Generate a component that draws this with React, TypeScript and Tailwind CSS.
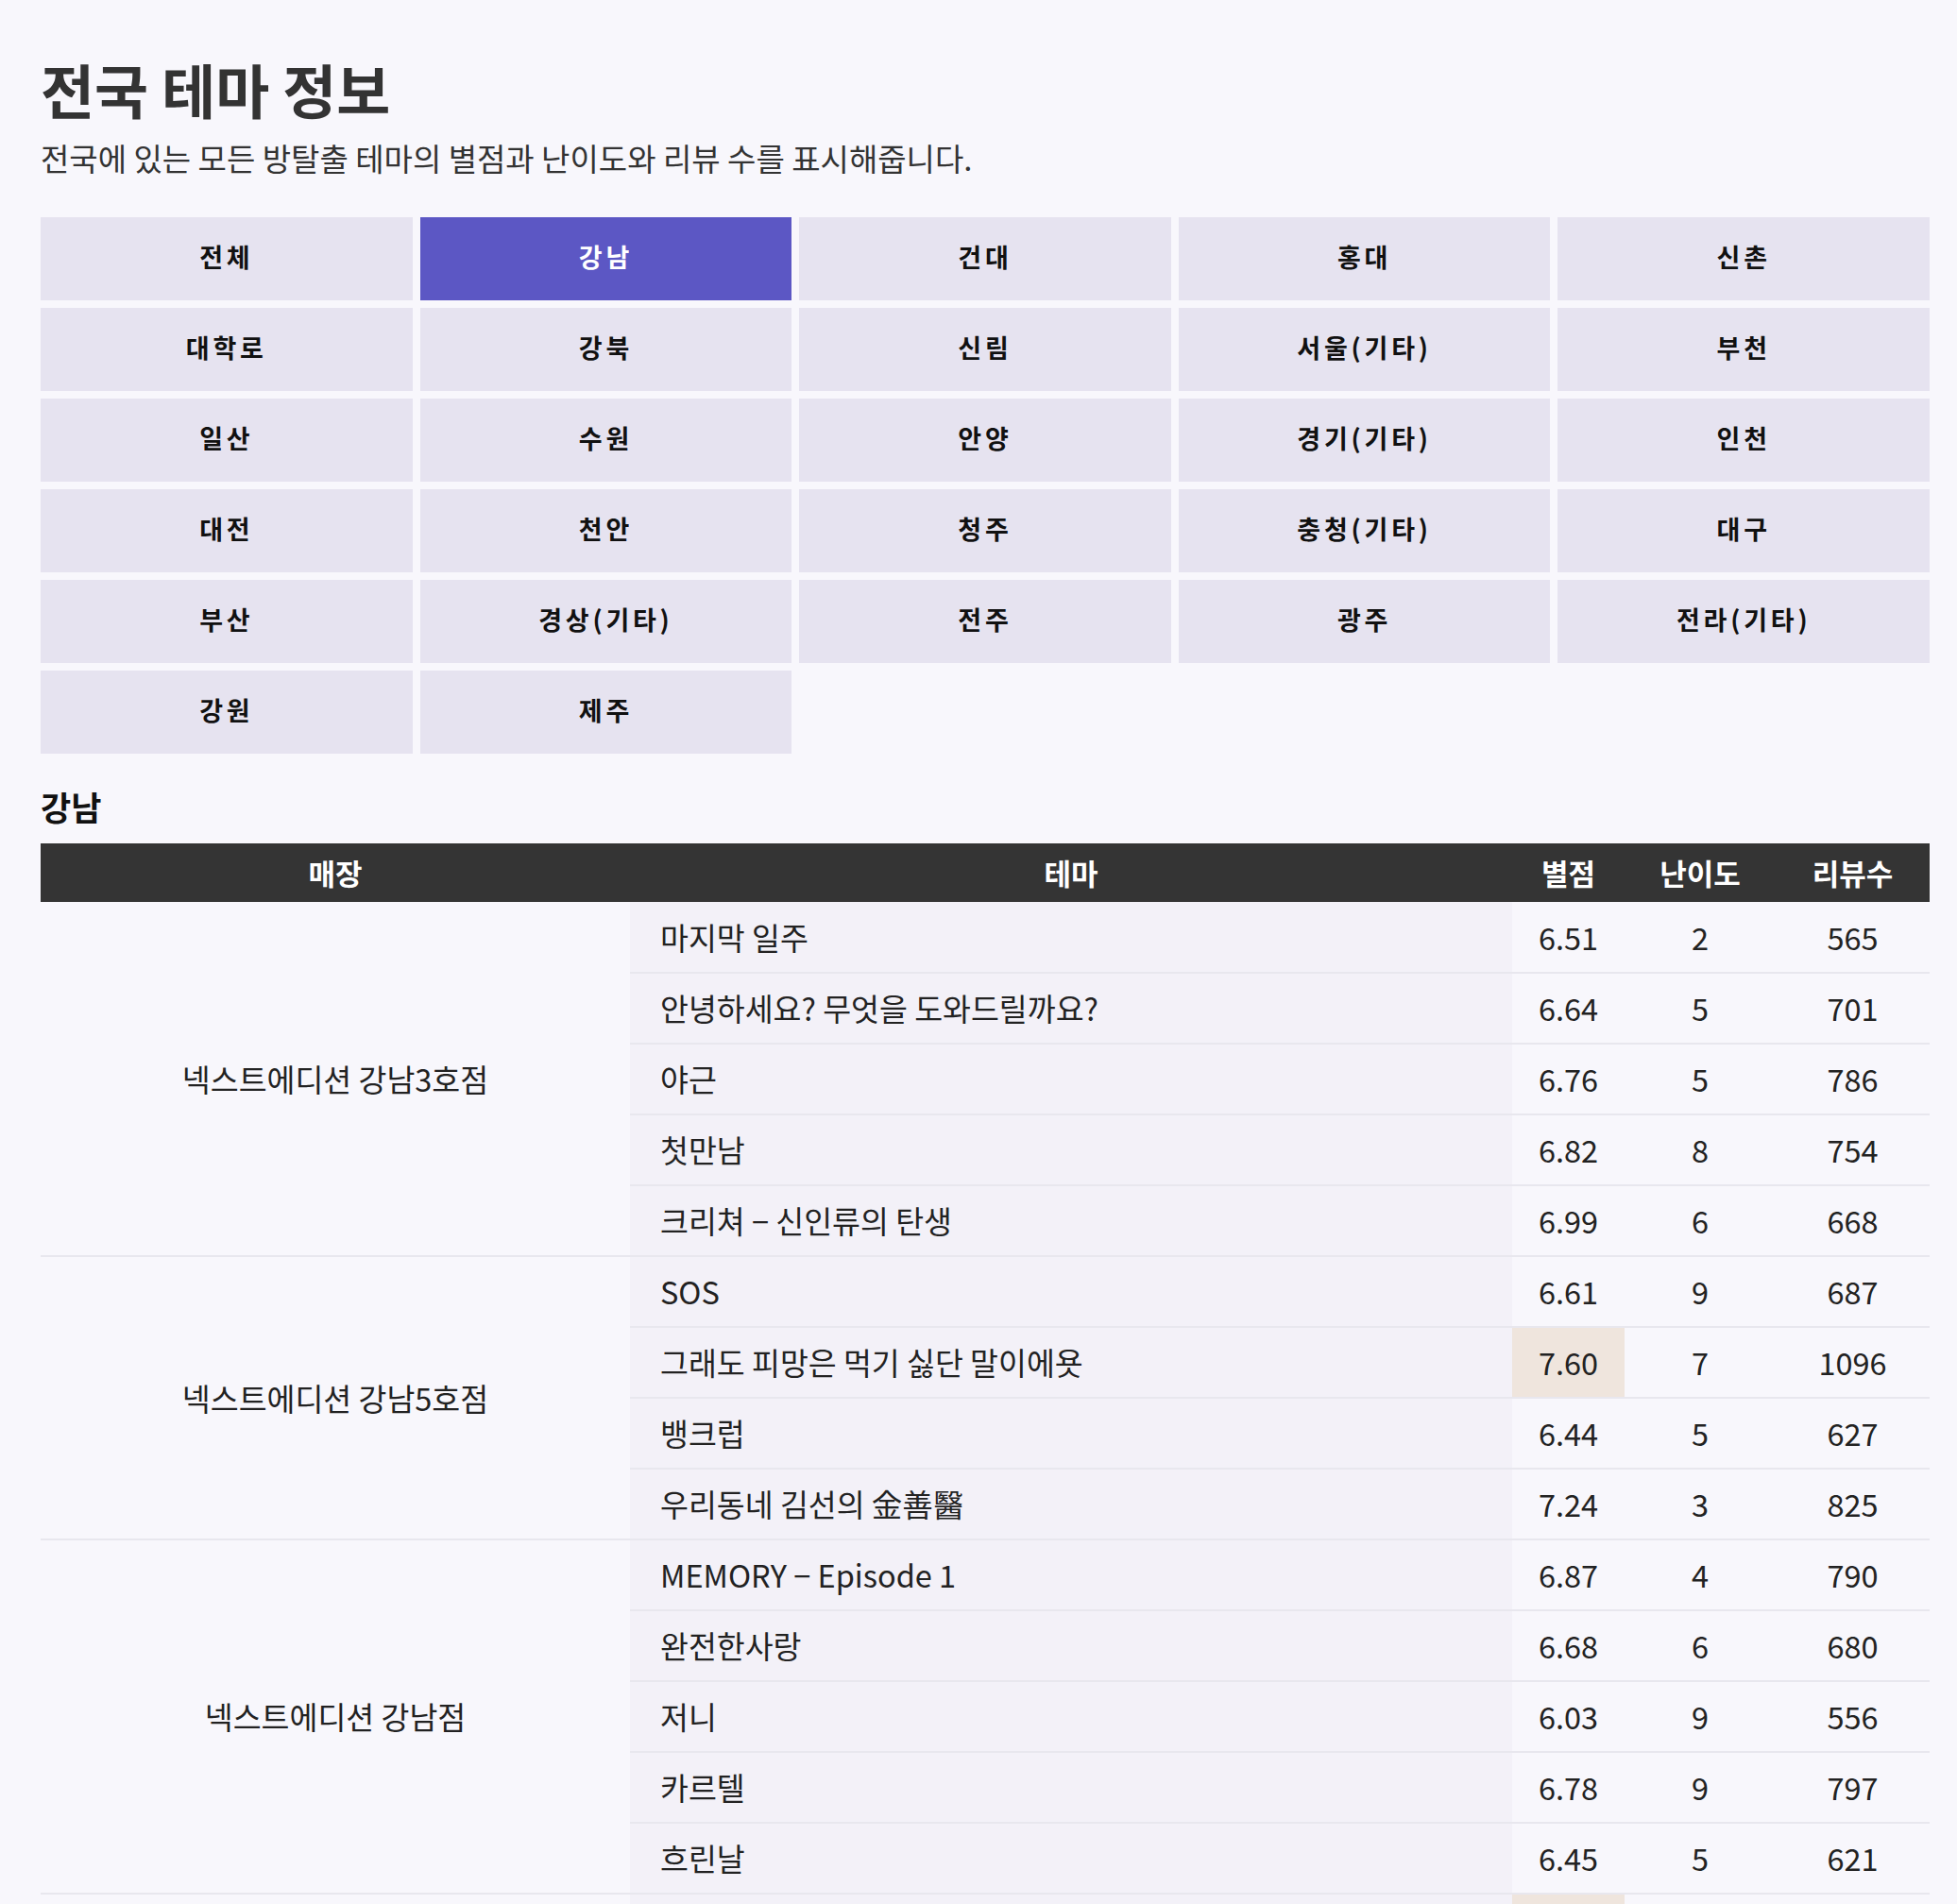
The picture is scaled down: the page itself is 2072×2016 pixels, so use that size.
import React from 'react';

const areas = [
  '전체', '강남', '건대', '홍대', '신촌',
  '대학로', '강북', '신림', '서울(기타)', '부천',
  '일산', '수원', '안양', '경기(기타)', '인천',
  '대전', '천안', '청주', '충청(기타)', '대구',
  '부산', '경상(기타)', '전주', '광주', '전라(기타)',
  '강원', '제주',
];

type Theme = { name: string; rating: string; level: number; reviews: number };
type Store = { name: string; themes: Theme[] };

const stores: Store[] = [
  {
    name: '넥스트에디션 강남3호점',
    themes: [
      { name: '마지막 일주', rating: '6.51', level: 2, reviews: 565 },
      { name: '안녕하세요? 무엇을 도와드릴까요?', rating: '6.64', level: 5, reviews: 701 },
      { name: '야근', rating: '6.76', level: 5, reviews: 786 },
      { name: '첫만남', rating: '6.82', level: 8, reviews: 754 },
      { name: '크리쳐 − 신인류의 탄생', rating: '6.99', level: 6, reviews: 668 },
    ],
  },
  {
    name: '넥스트에디션 강남5호점',
    themes: [
      { name: 'SOS', rating: '6.61', level: 9, reviews: 687 },
      { name: '그래도 피망은 먹기 싫단 말이에욧', rating: '7.60', level: 7, reviews: 1096 },
      { name: '뱅크럽', rating: '6.44', level: 5, reviews: 627 },
      { name: '우리동네 김선의 金善醫', rating: '7.24', level: 3, reviews: 825 },
    ],
  },
  {
    name: '넥스트에디션 강남점',
    themes: [
      { name: 'MEMORY − Episode 1', rating: '6.87', level: 4, reviews: 790 },
      { name: '완전한사랑', rating: '6.68', level: 6, reviews: 680 },
      { name: '저니', rating: '6.03', level: 9, reviews: 556 },
      { name: '카르텔', rating: '6.78', level: 9, reviews: 797 },
      { name: '흐린날', rating: '6.45', level: 5, reviews: 621 },
    ],
  },
  {
    name: '단편선 강남',
    themes: [
      { name: '어느 수집가의 초대', rating: '7.71', level: 6, reviews: 912 },
      { name: '별', rating: '7.05', level: 4, reviews: 488 },
    ],
  },
];

export default function App() {
  const selected = '강남';

  return (
    <div
      className="min-h-screen bg-[#f8f7fc] pl-[43px] pr-[29px] pt-[52px] text-[#333]"
      style={{ fontFamily: '"Noto Sans CJK KR", "Noto Sans", sans-serif' }}
    >
      <h1 className="text-[62px] font-bold leading-[84px] text-[#333]">전국 테마 정보</h1>
      <p className="mt-[10px] text-[33px] leading-[42px] text-[#333]">
        전국에 있는 모든 방탈출 테마의 별점과 난이도와 리뷰 수를 표시해줍니다.
      </p>

      <div className="mt-[42px] grid w-[2000px] grid-cols-5 gap-[8px]">
        {areas.map((a) => (
          <button
            key={a}
            className={
              a === selected
                ? 'h-[88px] bg-[#5c57c4] pb-[4px] text-[27px] font-bold tracking-[0.14em] text-white'
                : 'h-[88px] bg-[#e6e3f0] pb-[4px] text-[27px] font-bold tracking-[0.14em] text-[#111]'
            }
          >
            {a}
          </button>
        ))}
      </div>

      <h2 className="mt-[32px] text-[35px] font-bold leading-[48px] text-[#111]">강남</h2>

      <table className="mt-[15px] w-[2000px] table-fixed border-collapse text-[32.5px] text-[#222]">
        <colgroup>
          <col className="w-[624px]" />
          <col className="w-[934px]" />
          <col className="w-[119px]" />
          <col className="w-[160px]" />
          <col className="w-[163px]" />
        </colgroup>
        <thead>
          <tr className="h-[62px] bg-[#343434] text-[31px] text-white">
            <th className="font-bold">매장</th>
            <th className="font-bold">테마</th>
            <th className="font-bold">별점</th>
            <th className="font-bold">난이도</th>
            <th className="font-bold">리뷰수</th>
          </tr>
        </thead>
        <tbody>
          {stores.map((s) =>
            s.themes.map((t, i) => (
              <tr key={s.name + t.name} className="h-[75px]">
                {i === 0 && (
                  <td rowSpan={s.themes.length} className="border-b-2 border-[#e8e7ee] text-center">
                    {s.name}
                  </td>
                )}
                <td className="border-b-2 border-[#e8e7ee] bg-[#f3f1f8] pl-[32px]">{t.name}</td>
                <td
                  className={
                    parseFloat(t.rating) >= 7.5
                      ? 'border-b-2 border-[#e8e7ee] bg-[#efe5dd] text-center'
                      : 'border-b-2 border-[#e8e7ee] text-center'
                  }
                >
                  {t.rating}
                </td>
                <td className="border-b-2 border-[#e8e7ee] text-center">{t.level}</td>
                <td className="border-b-2 border-[#e8e7ee] text-center">{t.reviews}</td>
              </tr>
            ))
          )}
        </tbody>
      </table>
    </div>
  );
}
